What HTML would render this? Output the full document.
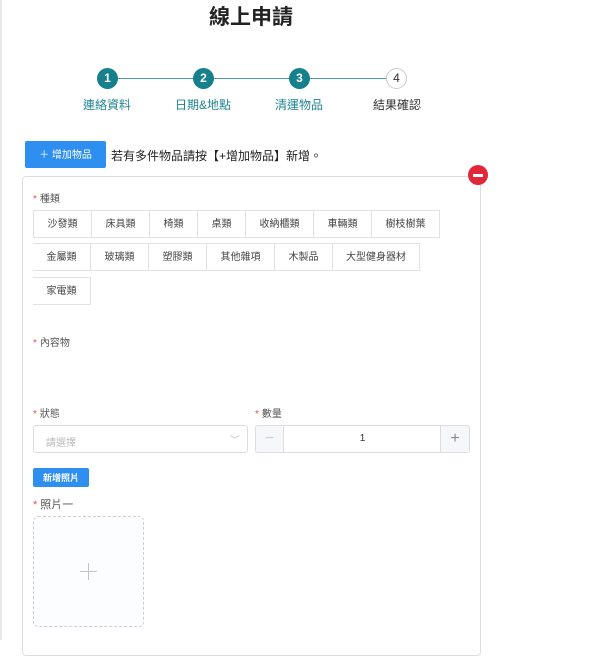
<!DOCTYPE html>
<html><head><meta charset="utf-8"><style>
*{box-sizing:border-box;margin:0;padding:0}
body{width:615px;height:640px;overflow:hidden;background:#fff;font-family:"Liberation Sans","Noto Sans CJK TC",sans-serif;position:relative;color:#333}
.abs{position:absolute}
.edge{left:0;top:0;width:2px;height:640px;background:#e8e8e8}
h1{position:absolute;left:0;width:502px;top:1px;text-align:center;font-size:21px;font-weight:bold;color:#222}
.line{height:1px;background:#4f9aa3;top:78px}
.c{width:21px;height:21px;border-radius:50%;background:#16808d;color:#fff;font-size:12px;font-weight:bold;text-align:center;line-height:21px;top:68px}
.c.o{background:#fff;border:1px solid #ccc;color:#333;line-height:19px;font-weight:normal}
.lab{top:96px;font-size:12px;color:#1f8491;width:80px;text-align:center}
.add{left:25px;top:141px;width:81px;height:27px;background:#2f8ff0;color:#fff;font-size:10px;border-radius:2px;text-align:center;line-height:29px}
.card{left:22px;top:176px;width:459px;height:480px;border:1px solid #ddd;border-radius:4px}
.rm{left:468px;top:165px;width:20px;height:20px;border-radius:50%;background:#e0283a}
.rm:after{content:"";position:absolute;left:5px;top:8.5px;width:10px;height:3px;background:#fff}
.fl{font-size:10px;color:#555}
.fl b{color:#e05050;font-weight:normal;margin-right:3px}
.t{height:28px;border:1px solid #e2e2e2;font-size:10px;color:#444;text-align:center;line-height:28px;background:#fff}
.inp{border:1px solid #ddd;border-radius:3px;height:28px}
</style></head><body>
<div class="abs edge"></div>
<h1>線上申請</h1>
<div class="abs line" style="left:110px;width:290px"></div>
<div class="abs c" style="left:97px">1</div>
<div class="abs c" style="left:193px">2</div>
<div class="abs c" style="left:289px">3</div>
<div class="abs c o" style="left:386px">4</div>
<div class="abs lab" style="left:67px">連絡資料</div>
<div class="abs lab" style="left:163px">日期&amp;地點</div>
<div class="abs lab" style="left:259px">清運物品</div>
<div class="abs lab" style="left:357px;color:#333">結果確認</div>
<div class="abs add">＋ 增加物品</div>
<div class="abs" style="left:111px;top:147px;font-size:12px;color:#222">若有多件物品請按【+增加物品】新增。</div>
<div class="abs card"></div>
<div class="abs rm"></div>
<div class="abs fl" style="left:33px;top:190px"><b>*</b>種類</div>
<div class="abs t" style="left:33px;top:210px;width:59px">沙發類</div>
<div class="abs t" style="left:91px;top:210px;width:59px">床具類</div>
<div class="abs t" style="left:149px;top:210px;width:49px">椅類</div>
<div class="abs t" style="left:197px;top:210px;width:49px">桌類</div>
<div class="abs t" style="left:245px;top:210px;width:69px">收納櫃類</div>
<div class="abs t" style="left:313px;top:210px;width:59px">車輛類</div>
<div class="abs t" style="left:371px;top:210px;width:69px">樹枝樹葉</div>
<div class="abs t" style="left:33px;top:243px;width:58px;border-left:none">金屬類</div>
<div class="abs t" style="left:90px;top:243px;width:59px">玻璃類</div>
<div class="abs t" style="left:148px;top:243px;width:59px">塑膠類</div>
<div class="abs t" style="left:206px;top:243px;width:69px">其他雜項</div>
<div class="abs t" style="left:274px;top:243px;width:59px">木製品</div>
<div class="abs t" style="left:332px;top:243px;width:88px">大型健身器材</div>
<div class="abs t" style="left:33px;top:277px;width:58px;border-left:none">家電類</div>
<div class="abs fl" style="left:33px;top:334px"><b>*</b>內容物</div>
<div class="abs fl" style="left:33px;top:405px"><b>*</b>狀態</div>
<div class="abs fl" style="left:255px;top:405px"><b>*</b>數量</div>
<div class="abs inp" style="left:33px;top:425px;width:215px"><span class="abs" style="left:12px;top:8px;font-size:10px;color:#bbb">請選擇</span><span class="abs" style="right:8px;top:7px;font-size:9px;color:#bbb">﹀</span></div>
<div class="abs inp" style="left:255px;top:425px;width:215px;overflow:hidden"><div class="abs" style="left:0;top:0;width:28px;height:26px;background:#f5f7fa;border-right:1px solid #ddd;text-align:center;line-height:26px;color:#ccc">−</div><div class="abs" style="left:0;width:213px;top:7px;text-align:center;font-size:10px">1</div><div class="abs" style="right:0;top:0;width:29px;height:26px;background:#f5f7fa;border-left:1px solid #ddd;text-align:center;line-height:26px;color:#888">+</div></div>
<div class="abs" style="left:33px;top:468px;width:56px;height:19px;background:#2f8ff0;border-radius:2px;color:#fff;font-size:9px;text-align:center;line-height:20px;font-weight:bold">新增照片</div>
<div class="abs fl" style="left:33px;top:496px;font-size:11px"><b>*</b>照片一</div>
<div class="abs" style="left:33px;top:516px;width:111px;height:111px;border:1px dashed #ccd;border-radius:5px;background:#fbfdff"></div>
<div class="abs" style="left:80px;top:571px;width:17px;height:1px;background:#c0c4cc"></div>
<div class="abs" style="left:88px;top:563px;width:1px;height:17px;background:#c0c4cc"></div>
</body></html>
